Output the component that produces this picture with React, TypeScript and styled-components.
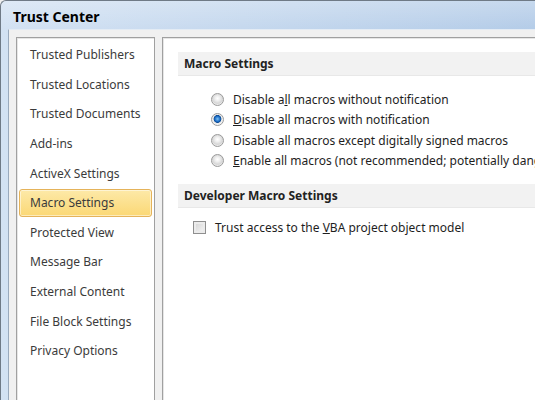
import React from 'react';
import styled, { createGlobalStyle } from 'styled-components';

const GlobalStyle = createGlobalStyle`
  html, body {
    margin: 0;
    padding: 0;
    width: 535px;
    height: 400px;
    overflow: hidden;
    background: #f0f0f0;
  }
  #root {
    height: 100%;
  }
`;

const Window = styled.div`
  height: 400px;
  display: flex;
  flex-direction: column;
  background: linear-gradient(to right, #d3e2f3, #b4cce8);
  border-top: 1px solid #6f7a86;
  border-left: 1px solid #6f7a86;
  border-top-left-radius: 6px;
  box-sizing: border-box;
  overflow: hidden;
  font-family: 'Segoe UI', 'Noto Sans', sans-serif;
`;

const TitleBar = styled.div`
  height: 28px;
  flex-shrink: 0;
  display: flex;
  align-items: center;
  padding-left: 12px;
  padding-top: 3px;
  box-sizing: border-box;
  font-family: 'Segoe UI', 'Noto Sans', sans-serif;
  font-weight: bold;
  font-size: 14px;
  color: #000;
  background: linear-gradient(to bottom, rgba(255, 255, 255, 0.25), rgba(255, 255, 255, 0));
`;

const Body = styled.div`
  flex: 1;
  display: flex;
  gap: 7px;
  margin-left: 7px;
  padding: 7px 0 0 7px;
  background: #f0f0f0;
  border-top: 1px solid #e3ebf4;
  border-left: 1px solid #9aaabd;
  min-height: 0;
  overflow: hidden;
`;

const Panel = styled.div`
  background: #fff;
  border: 1px solid #a0a0a0;
  border-bottom: none;
  box-shadow: inset 1px 1px 0 #e6e6e6;
`;

const NavPanel = styled(Panel)`
  width: 135px;
  flex-shrink: 0;
  padding: 2px 1px 0;
`;

const ContentPanel = styled(Panel)`
  flex: 1;
  margin-right: -40px;
  padding: 14px 0 0 15px;
`;

const NavItem = styled.div`
  height: 29.6px;
  display: flex;
  align-items: center;
`;

const NavLabel = styled.div<{ $active?: boolean }>`
  flex: 1;
  height: 26px;
  margin: 0 1px;
  padding-left: 10px;
  display: flex;
  align-items: center;
  font-size: 12px;
  color: #3b3b3b;
  border-radius: 3px;
  border: 1px solid ${p => (p.$active ? '#e5b35a' : 'transparent')};
  background: ${p =>
    p.$active ? 'linear-gradient(to bottom, #fde9a8, #fbd875)' : 'transparent'};
  box-shadow: ${p => (p.$active ? 'inset 0 0 0 1px rgba(255,255,255,0.5)' : 'none')};
`;

const SectionHeader = styled.div`
  height: 24px;
  display: flex;
  align-items: center;
  padding-left: 6px;
  font-size: 12px;
  font-weight: bold;
  color: #222;
  background: #f2f2f2;
  border-bottom: 1px solid #e8e8e8;
  box-sizing: border-box;
`;

const OptionGroup = styled.div<{ $indent: number; $top?: number }>`
  display: flex;
  flex-direction: column;
  padding: ${p => p.$top ?? 13}px 0 13px ${p => p.$indent}px;
`;

const OptionRow = styled.label`
  height: 20.5px;
  display: flex;
  align-items: center;
  gap: 9px;
  font-size: 12px;
  color: #1e1e1e;
  white-space: nowrap;
`;

const Radio = styled.span<{ $checked?: boolean }>`
  width: 13px;
  height: 13px;
  flex-shrink: 0;
  border-radius: 50%;
  box-sizing: border-box;
  border: 1px solid #9a9a9a;
  background: ${p =>
    p.$checked
      ? 'radial-gradient(circle at 50% 45%, #7ec3f4 0, #1f6fc8 2.5px, #0c4c96 3.6px, #e8e8e8 4.2px, #f6f6f6 6px)'
      : 'radial-gradient(circle at 50% 40%, #ffffff 0, #f2f2f2 2px, #d6d6d6 5px, #eaeaea 6px)'};
`;

const CheckBox = styled.span`
  width: 13px;
  height: 13px;
  flex-shrink: 0;
  box-sizing: border-box;
  border: 1px solid #8f8f8f;
  background: linear-gradient(135deg, #d2d2d2, #f7f7f7);
  box-shadow: inset 0 0 0 2px #ebebeb;
`;

const navItems = [
  'Trusted Publishers',
  'Trusted Locations',
  'Trusted Documents',
  'Add-ins',
  'ActiveX Settings',
  'Macro Settings',
  'Protected View',
  'Message Bar',
  'External Content',
  'File Block Settings',
  'Privacy Options',
];

const App: React.FC = () => {
  return (
    <>
      <GlobalStyle />
      <Window>
        <TitleBar>Trust Center</TitleBar>
        <Body>
          <NavPanel>
            {navItems.map(item => (
              <NavItem key={item}>
                <NavLabel $active={item === 'Macro Settings'}>{item}</NavLabel>
              </NavItem>
            ))}
          </NavPanel>
          <ContentPanel>
            <SectionHeader>Macro Settings</SectionHeader>
            <OptionGroup $indent={33}>
              <OptionRow>
                <Radio />
                <span>
                  Disable a<u>l</u>l macros without notification
                </span>
              </OptionRow>
              <OptionRow>
                <Radio $checked />
                <span>
                  <u>D</u>isable all macros with notification
                </span>
              </OptionRow>
              <OptionRow>
                <Radio />
                <span>Disable all macros except digitally signed macros</span>
              </OptionRow>
              <OptionRow>
                <Radio />
                <span>
                  <u>E</u>nable all macros (not recommended; potentially dangerous code can run)
                </span>
              </OptionRow>
            </OptionGroup>
            <SectionHeader>Developer Macro Settings</SectionHeader>
            <OptionGroup $indent={15} $top={9}>
              <OptionRow>
                <CheckBox />
                <span>
                  Trust access to the <u>V</u>BA project object model
                </span>
              </OptionRow>
            </OptionGroup>
          </ContentPanel>
        </Body>
      </Window>
    </>
  );
};

export default App;
